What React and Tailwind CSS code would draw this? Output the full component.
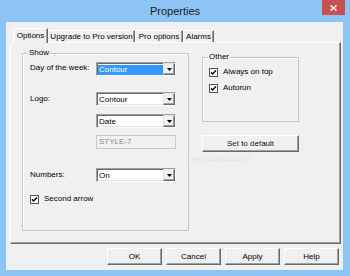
const font = { fontFamily: '"Liberation Sans", Arial, sans-serif' };

function Arrow() {
  return (
    <svg width="5" height="3" viewBox="0 0 5 3">
      <path d="M0 0h5L2.5 3z" fill="#000" />
    </svg>
  );
}

function Combo({ value, selected }) {
  return (
    <div className="flex h-[14px] w-[80px] bg-white border border-t-[#a0a0a0] border-l-[#a0a0a0] border-r-white border-b-white shadow-[inset_1px_1px_0_#696969,inset_-1px_-1px_0_#e3e3e3]">
      <div className="flex flex-1 items-center pl-[1px] pt-[1px]">
        <span
          className={
            selected
              ? 'flex h-[10px] w-full items-center bg-[#3399ff] pl-[1px] text-white'
              : 'pl-[1px] text-black'
          }
        >
          {value}
        </span>
      </div>
      <div className="flex h-[12px] w-[12px] items-center justify-center border border-t-[#e3e3e3] border-l-[#e3e3e3] border-r-[#696969] border-b-[#696969] bg-[#f0f0f0] shadow-[inset_-1px_-1px_0_#a0a0a0]">
        <Arrow />
      </div>
    </div>
  );
}

function Check({ label }) {
  return (
    <div className="flex items-center gap-[5px]">
      <svg width="9" height="9" viewBox="0 0 9 9">
        <rect x="0.5" y="0.5" width="8" height="8" fill="#fff" stroke="#555" />
        <path d="M2 4.2l1.6 1.8L7 2.4" fill="none" stroke="#000" strokeWidth="1.4" />
      </svg>
      <span>{label}</span>
    </div>
  );
}

function Btn({ children, className = '' }) {
  return (
    <button
      className={`flex items-center justify-center border border-t-white border-l-white border-r-[#696969] border-b-[#696969] bg-[#f0f0f0] shadow-[inset_-1px_-1px_0_#a0a0a0] text-black ${className}`}
    >
      {children}
    </button>
  );
}

function Tab({ label, active, width }) {
  return active ? (
    <div
      className={`relative z-10 -mb-px flex h-[15px] ${width} items-start justify-center border-l border-t border-r border-l-white border-t-white border-r-[#696969] bg-[#f0f0f0] pt-[2px] shadow-[inset_-1px_0_0_#a0a0a0]`}
    >
      {label}
    </div>
  ) : (
    <div
      className={`flex h-[12px] ${width} items-start justify-center border-l border-t border-r border-l-white border-t-white border-r-[#696969] bg-[#f0f0f0] pt-px shadow-[inset_-1px_0_0_#a0a0a0]`}
    >
      {label}
    </div>
  );
}

export default function App() {
  return (
    <div
      className="relative flex h-[276px] w-[350px] flex-col overflow-hidden bg-[#8cc5f4] text-[8px] leading-[10px] text-black"
      style={font}
    >
      {/* title bar */}
      <div className="grid h-[22px] grid-cols-[1fr_auto_1fr]">
        <div />
        <div className="pt-[5px] text-[11px] leading-[12px] text-[#1a1a1a]">Properties</div>
        <div className="flex justify-end pr-[5px]">
          <div className="flex h-[15px] w-[23px] items-center justify-center bg-[#c75050]">
            <svg width="7" height="6" viewBox="0 0 7 6">
              <path d="M0.5 0.5l6 5M6.5 0.5l-6 5" stroke="#fff" strokeWidth="1.5" />
            </svg>
          </div>
        </div>
      </div>

      {/* client area */}
      <div className="ml-[6px] mr-[7px] flex h-[248px] flex-col bg-[#f0f0f0]">
        <div className="flex h-[20px] items-end pl-[7px]">
          <Tab label="Options" active width="w-[35px]" />
          <Tab label="Upgrade to Pro version" width="w-[87px]" />
          <Tab label="Pro options" width="w-[48px]" />
          <Tab label="Alarms" width="w-[31px]" />
        </div>

        <div className="ml-[4px] mr-[2px] flex h-[202px] border border-t-white border-l-white border-r-[#696969] border-b-[#696969] bg-[#f0f0f0] pl-[11px] shadow-[inset_-1px_-1px_0_#a0a0a0]">
          {/* Show group */}
          <fieldset className="mt-[5px] h-[183px] w-[167px] border border-[#c6c6c6] p-0 shadow-[inset_1px_1px_0_#fff]">
            <legend className="ml-[5px] bg-[#f0f0f0] px-px">Show</legend>
            <div className="flex flex-col pl-[7px]">
              <div className="mt-[4px] flex items-start">
                <span className="w-[66px] pt-[1px]">Day of the week:</span>
                <Combo value="Contour" selected />
              </div>
              <div className="mt-[16px] flex items-center">
                <span className="w-[66px]">Logo:</span>
                <Combo value="Contour" />
              </div>
              <div className="mt-[8px] flex items-center">
                <span className="w-[66px]" />
                <Combo value="Date" />
              </div>
              <div className="mt-[7px] flex items-center">
                <span className="w-[66px]" />
                <div className="flex h-[14px] w-[80px] items-center border border-[#c8c8c8] bg-[#f0f0f0] pl-[2px] text-[#8a8a8a]">
                  STYLE-7
                </div>
              </div>
              <div className="mt-[19px] flex items-center">
                <span className="w-[66px]">Numbers:</span>
                <Combo value="On" />
              </div>
              <div className="mt-[12px]">
                <Check label="Second arrow" />
              </div>
            </div>
          </fieldset>

          {/* right column */}
          <div className="ml-[13px] flex w-[97px] flex-col">
            <fieldset className="mt-[9px] h-[70px] w-[97px] border border-[#c6c6c6] p-0 shadow-[inset_1px_1px_0_#fff]">
              <legend className="ml-[5px] bg-[#f0f0f0] px-px">Other</legend>
              <div className="flex flex-col gap-[6px] pl-[6px] pt-[5px]">
                <Check label="Always on top" />
                <Check label="Autorun" />
              </div>
            </fieldset>
            <Btn className="mt-[13px] h-[17px] w-[97px]">Set to default</Btn>
          </div>
        </div>

        <div className="mt-[4px] flex justify-end gap-[4px] pr-[4px]">
          <Btn className="h-[17px] w-[55px]">OK</Btn>
          <Btn className="h-[17px] w-[55px]">Cancel</Btn>
          <Btn className="h-[17px] w-[55px]">Apply</Btn>
          <Btn className="h-[17px] w-[55px]">Help</Btn>
        </div>
      </div>

      {/* faint watermark */}
      <div
        className="pointer-events-none absolute left-[172px] top-[134px] text-[17px] font-bold leading-[17px] tracking-[1px] text-white/20"
        style={{ fontFamily: '"Liberation Serif", serif' }}
      >
        SOFTPEDIA
      </div>
      <div className="pointer-events-none absolute left-[190px] top-[155px] text-[7px] leading-[8px] text-[#e2e2e2]">
        www.softpedia.com
      </div>
    </div>
  );
}
